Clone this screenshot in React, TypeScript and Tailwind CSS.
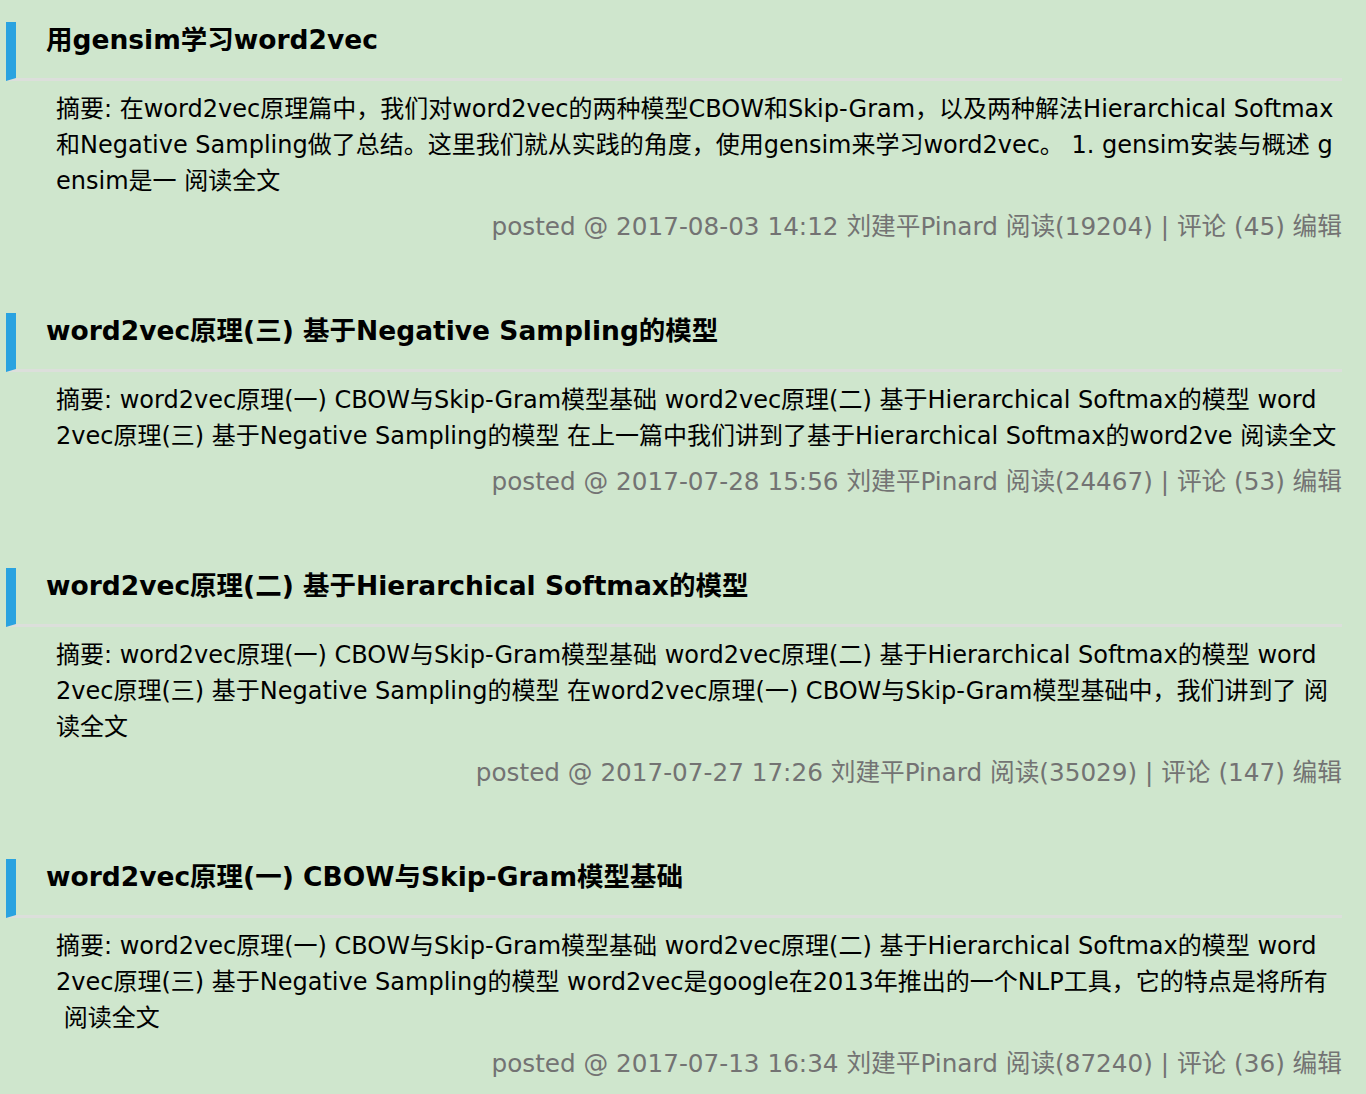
import React from 'react'

interface Post {
  title: string
  lines: string[]
  meta: string
}

const posts: Post[] = [
  {
    title: '用gensim学习word2vec',
    lines: [
      '摘要: 在word2vec原理篇中，我们对word2vec的两种模型CBOW和Skip-Gram，以及两种解法Hierarchical Softmax',
      '和Negative Sampling做了总结。这里我们就从实践的角度，使用gensim来学习word2vec。 1. gensim安装与概述 g',
      'ensim是一 阅读全文',
    ],
    meta: 'posted @ 2017-08-03 14:12 刘建平Pinard 阅读(19204) | 评论 (45) 编辑',
  },
  {
    title: 'word2vec原理(三) 基于Negative Sampling的模型',
    lines: [
      '摘要: word2vec原理(一) CBOW与Skip-Gram模型基础 word2vec原理(二) 基于Hierarchical Softmax的模型 word',
      '2vec原理(三) 基于Negative Sampling的模型 在上一篇中我们讲到了基于Hierarchical Softmax的word2ve 阅读全文',
    ],
    meta: 'posted @ 2017-07-28 15:56 刘建平Pinard 阅读(24467) | 评论 (53) 编辑',
  },
  {
    title: 'word2vec原理(二) 基于Hierarchical Softmax的模型',
    lines: [
      '摘要: word2vec原理(一) CBOW与Skip-Gram模型基础 word2vec原理(二) 基于Hierarchical Softmax的模型 word',
      '2vec原理(三) 基于Negative Sampling的模型 在word2vec原理(一) CBOW与Skip-Gram模型基础中，我们讲到了 阅',
      '读全文',
    ],
    meta: 'posted @ 2017-07-27 17:26 刘建平Pinard 阅读(35029) | 评论 (147) 编辑',
  },
  {
    title: 'word2vec原理(一) CBOW与Skip-Gram模型基础',
    lines: [
      '摘要: word2vec原理(一) CBOW与Skip-Gram模型基础 word2vec原理(二) 基于Hierarchical Softmax的模型 word',
      '2vec原理(三) 基于Negative Sampling的模型 word2vec是google在2013年推出的一个NLP工具，它的特点是将所有',
      ' 阅读全文',
    ],
    meta: 'posted @ 2017-07-13 16:34 刘建平Pinard 阅读(87240) | 评论 (36) 编辑',
  },
]

export default function App() {
  return (
    <div
      className="min-h-screen bg-[#cfe6cd] pt-[22px] pl-[6px] pr-[24px] text-black"
      style={{ fontFamily: '"DejaVu Sans", Verdana, "Noto Sans CJK SC", sans-serif' }}
    >
      {posts.map((post) => (
        <div key={post.title} className="mb-[68px]">
          <h2 className="h-[59px] border-b-[3px] border-l-[10px] border-b-[#dcdfdb] border-l-[#2aa3e0] pl-[30px] text-[26.5px] font-bold leading-[36px] whitespace-nowrap">
            {post.title}
          </h2>
          <div className="mt-[10px] pl-[50px] text-[24px] leading-[36px]">
            {post.lines.map((line) => (
              <div key={line} className="whitespace-pre">
                {line}
              </div>
            ))}
          </div>
          <div className="mt-[10px] whitespace-nowrap text-right text-[24.7px] leading-[36px] text-[#737373]">{post.meta}</div>
        </div>
      ))}
    </div>
  )
}
